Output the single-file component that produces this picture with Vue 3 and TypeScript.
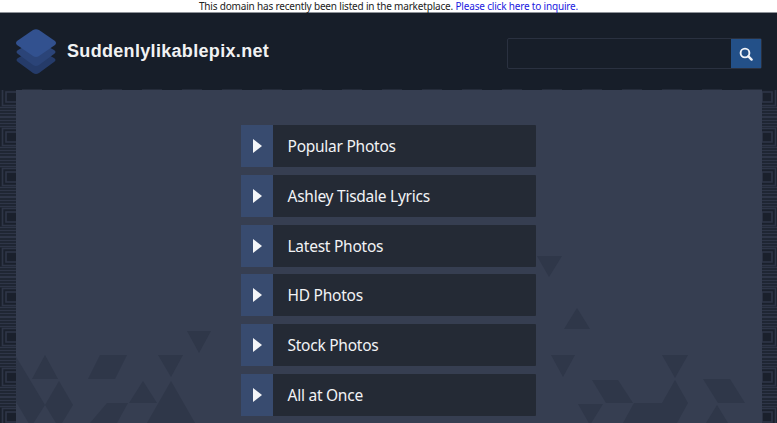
<template>
  <div class="page">
    <div class="notice">
      This domain has recently been listed in the marketplace.
      <a href="#">Please click here to inquire.</a>
    </div>

    <header class="top">
      <div class="brand">
        <svg class="logo" width="42" height="46" viewBox="0 0 42 46">
          <path d="M21 19 L39 29 Q42 31 39 33 L24 44 Q21 46 18 44 L3 33 Q0 31 3 29 Z" fill="#253b69" />
          <path d="M21 11 L39 21 Q42 23 39 25 L24 36 Q21 38 18 36 L3 25 Q0 23 3 21 Z" fill="#2b4478" />
          <path d="M18 1 Q21 -0.5 24 1 L40 12 Q42 14 40 16 L24 27 Q21 29 18 27 L2 16 Q0 14 2 12 Z" fill="#32518f" />
        </svg>
        <span class="name">Suddenlylikablepix.net</span>
      </div>
      <div class="search">
        <input class="search-input" type="text" />
        <button class="search-btn" type="button" aria-label="Search">
          <svg width="14" height="14" viewBox="0 0 14 14">
            <circle cx="6" cy="6" r="4.4" fill="none" stroke="#f2f4f8" stroke-width="1.9" />
            <path d="M9.4 9.4 L12.6 12.6" stroke="#f2f4f8" stroke-width="2.4" stroke-linecap="round" />
          </svg>
        </button>
      </div>
    </header>

    <main class="frame">
      <svg class="frame-pattern" width="777" height="334">
        <defs>
          <pattern id="side" width="16" height="40" patternUnits="userSpaceOnUse" y="-12">
            <rect width="16" height="40" fill="#1a202c" />
            <path d="M0 .5H16M0 3.5H16M0 6.5H16M0 9.5H16M0 30.5H16M0 33.5H16M0 36.5H16M0 39.5H16" stroke="#2e3547" stroke-width="1.6" />
            <path d="M16 11.5H2.5V28.5H16M16 15H6V25H16" fill="none" stroke="#2e3547" stroke-width="1.6" />
          </pattern>
          <pattern id="side-r" width="15" height="40" patternUnits="userSpaceOnUse" x="762" y="-12">
            <rect width="15" height="40" fill="#1a202c" />
            <path d="M0 .5H15M0 3.5H15M0 6.5H15M0 9.5H15M0 30.5H15M0 33.5H15M0 36.5H15M0 39.5H15" stroke="#2e3547" stroke-width="1.6" />
            <path d="M0 11.5H13.5V28.5H0M0 15H10V25H0V15" fill="none" stroke="#2e3547" stroke-width="1.6" />
          </pattern>
        </defs>
        <rect y="1" width="16" height="333" fill="url(#side)" />
        <rect x="762" y="1" width="15" height="333" fill="url(#side-r)" />
        <line x1="22" y1="0.5" x2="762" y2="0.5" stroke="#252c3a" stroke-dasharray="20 20" />
      </svg>

      <div class="panel">
        <svg class="shapes" width="746" height="333" viewBox="16 90 746 333">
          <polygon v-for="(s, i) in shapes" :key="i" :points="s" fill="#2f3749" />
        </svg>
        <nav class="menu">
          <a v-for="item in items" :key="item" class="menu-item" href="#">
            <span class="arrow"><i class="tri"></i></span>
            <span class="label">{{ item }}</span>
          </a>
        </nav>
      </div>
    </main>
  </div>
</template>

<script setup lang="ts">
const items: string[] = [
  'Popular Photos',
  'Ashley Tisdale Lyrics',
  'Latest Photos',
  'HD Photos',
  'Stock Photos',
  'All at Once',
];

// decorative triangles behind the menu, in page coordinates
const shapes: string[] = [
  '45,355 58,379 32,379',
  '100,355 127,355 115,379 88,379',
  '158,355 183,355 171,377',
  '187,331 211,331 199,353',
  '15,355 45,405 31,427 15,400',
  '59,381 73,405 59,428 45,405',
  '143,381 157,403 129,403',
  '171,381 195,423 147,423',
  '107,403 128,403 117,423 90,423',
  '537,256 562,256 549,277',
  '577,308 590,329 564,329',
  '551,355 575,355 563,377',
  '662,355 688,355 675,378',
  '592,380 618,380 633,403 606,403',
  '675,380 688,403 677,423 623,423 634,403 662,403',
  '703,379 730,379 745,403 718,403',
  '578,404 603,404 590,425',
  '717,405 728,423 706,423',
];
</script>

<style scoped>
.page {
  height: 423px;
  display: flex;
  flex-direction: column;
  background: #171e29;
  overflow: hidden;
}

.notice {
  height: 12px;
  flex: none;
  background: #fff;
  border-bottom: 1px solid #8f9399;
  text-align: center;
  color: #222;
  font-size: 10px;
  letter-spacing: -0.18px;
  line-height: 13px;
  white-space: nowrap;
}

.notice a {
  color: #1a1ae0;
  text-decoration: none;
}

.top {
  height: 76px;
  flex: none;
  display: flex;
  align-items: center;
  justify-content: space-between;
  padding: 0 15px;
  box-sizing: border-box;
  background: #171e29;
}

.brand {
  display: flex;
  align-items: center;
  gap: 10px;
  margin-top: 2px;
}

.logo {
  display: block;
}

.name {
  font-family: "Liberation Sans", Arial, sans-serif;
  font-weight: 700;
  font-size: 18px;
  letter-spacing: 0.32px;
  color: #f1f2f3;
  margin-bottom: 2px;
}

.search {
  display: flex;
  width: 255px;
  height: 31px;
  margin-top: 5px;
  border: 1px solid #2a3140;
  box-sizing: border-box;
  border-radius: 2px;
}

.search-input {
  flex: 1;
  min-width: 0;
  background: transparent;
  border: none;
  outline: none;
}

.search-btn {
  width: 30px;
  flex: none;
  padding: 0;
  border: none;
  background: #235088;
  display: flex;
  align-items: center;
  justify-content: center;
}

.frame {
  flex: 1;
  position: relative;
  padding: 1px 15px 0 16px;
}

.frame-pattern {
  position: absolute;
  left: 0;
  top: 0;
}

.panel {
  position: relative;
  height: 100%;
  background: #363e51;
  overflow: hidden;
}

.shapes {
  position: absolute;
  left: 0;
  top: 0;
}

.menu {
  position: relative;
  display: flex;
  flex-direction: column;
  gap: 7.8px;
  width: 295px;
  margin: 35px 0 0 225px;
}

.menu-item {
  display: flex;
  height: 42px;
  background: #242a35;
  border-radius: 1px;
  color: #f2f3f5;
  text-decoration: none;
}

.arrow {
  width: 32px;
  flex: none;
  background: #384b6f;
  display: flex;
  align-items: center;
  justify-content: center;
}

.tri {
  width: 0;
  height: 0;
  border-style: solid;
  border-width: 7px 0 7px 9px;
  border-color: transparent transparent transparent #f4f5f7;
}

.label {
  padding-left: 14.5px;
  font-size: 15.5px;
  letter-spacing: -0.25px;
  line-height: 42px;
}
</style>

<style>
html,
body {
  margin: 0;
  overflow: hidden;
  font-family: "Noto Sans", "Open Sans", sans-serif;
}
</style>
